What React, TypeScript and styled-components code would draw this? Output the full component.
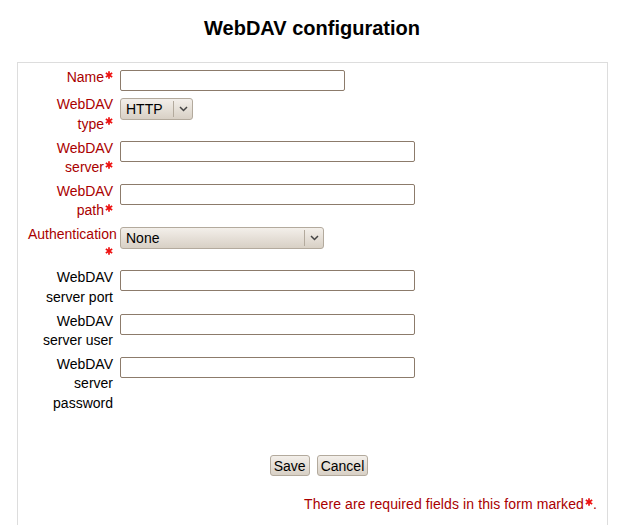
import React from "react";
import styled, { createGlobalStyle } from "styled-components";

const Global = createGlobalStyle`
  html, body { margin: 0; padding: 0; background: #fff; }
  body { font-family: "Liberation Sans", Arial, sans-serif; color: #000; }
`;

const Page = styled.div`
  width: 624px;
  height: 525px;
  overflow: hidden;
`;

const Title = styled.h2`
  margin: 0;
  padding-top: 17px;
  height: 62px;
  box-sizing: border-box;
  text-align: center;
  font-size: 20px;
  font-weight: bold;
  line-height: 23px;
`;

const Panel = styled.div`
  margin: 0 16px 0 17px;
  border: 1px solid #dddddd;
  border-bottom: none;
  padding: 5px 10px 0 10px;
  height: 500px;
  box-sizing: border-box;
`;

const Rows = styled.div`
  display: flex;
  flex-direction: column;
  gap: 4.25px;
`;

const Row = styled.div`
  display: grid;
  grid-template-columns: 85px 1fr;
  column-gap: 7px;
  align-items: start;
`;

const Label = styled.label<{ $required?: boolean }>`
  text-align: right;
  font-size: 14px;
  line-height: 19.5px;
  color: ${(p) => (p.$required ? "#aa0000" : "#000")};
`;

const StarIcon = styled.svg`
  display: inline-block;
  width: 8px;
  height: 8px;
  margin-left: 1px;
  vertical-align: 3.5px;
`;

const Star = () => (
  <StarIcon viewBox="0 0 8 8" aria-label="Required field">
    <g stroke="#ee1111" strokeWidth="1.7" strokeLinecap="butt">
      <line x1="4" y1="0.3" x2="4" y2="7.7" />
      <line x1="0.8" y1="2.1" x2="7.2" y2="5.9" />
      <line x1="0.8" y1="5.9" x2="7.2" y2="2.1" />
    </g>
  </StarIcon>
);

const Field = styled.div<{ $top?: number }>`
  padding-top: ${(p) => p.$top ?? 2}px;
`;

const TextInput = styled.input<{ $w: number }>`
  display: block;
  box-sizing: border-box;
  width: ${(p) => p.$w}px;
  height: 21px;
  margin: 0;
  border: 1px solid #8c7b6b;
  border-radius: 2px;
  background: #fff;
  outline: none;
`;

const SelectBox = styled.div<{ $w: number }>`
  box-sizing: border-box;
  width: ${(p) => p.$w}px;
  height: 22px;
  display: flex;
  align-items: stretch;
  border: 1px solid #b3aa9d;
  border-radius: 3px;
  background: linear-gradient(#f3efea, #d8d0c5);
  font-size: 14px;
  color: #000;
`;

const SelectText = styled.span`
  flex: 1;
  display: flex;
  align-items: center;
  padding-left: 5px;
`;

const SelectArrow = styled.span`
  width: 18px;
  display: flex;
  align-items: center;
  justify-content: center;
  border-left: 1px solid #b3aa9d;
  margin: 2px 0;
`;

const Actions = styled.div`
  display: flex;
  justify-content: center;
  gap: 7px;
  margin-top: 42px;
  padding-left: 13px;
`;

const Button = styled.button`
  box-sizing: border-box;
  height: 21px;
  padding: 0 3px;
  border: 1px solid #b3aa9d;
  border-radius: 3px;
  background: linear-gradient(#f3efea, #d8d0c5);
  font-family: "Liberation Sans", Arial, sans-serif;
  font-size: 14px;
  color: #000;
`;

const Note = styled.div`
  margin-top: 20px;
  text-align: right;
  font-size: 14px;
  letter-spacing: 0.1px;
  color: #aa0000;
`;

const Chevron = () => (
  <svg width="9" height="6" viewBox="0 0 9 6">
    <path d="M1 1 L4.5 4.5 L8 1" fill="none" stroke="#444" strokeWidth="1.5" />
  </svg>
);

const Select = ({ w, value }: { w: number; value: string }) => (
  <SelectBox $w={w}>
    <SelectText>{value}</SelectText>
    <SelectArrow>
      <Chevron />
    </SelectArrow>
  </SelectBox>
);

type Item = {
  label: React.ReactNode;
  required?: boolean;
  kind: "input" | "select";
  w: number;
  value?: string;
  top?: number;
};

const items: Item[] = [
  { label: "Name", required: true, kind: "input", w: 225 },
  { label: <>WebDAV<br />type</>, required: true, kind: "select", w: 73, value: "HTTP", top: 3 },
  { label: <>WebDAV<br />server</>, required: true, kind: "input", w: 295 },
  { label: <>WebDAV<br />path</>, required: true, kind: "input", w: 295 },
  { label: "Authentication", required: true, kind: "select", w: 204, value: "None" },
  { label: <>WebDAV<br />server port</>, kind: "input", w: 295 },
  { label: <>WebDAV<br />server user</>, kind: "input", w: 295 },
  { label: <>WebDAV<br />server<br />password</>, kind: "input", w: 295 },
];

export default function App() {
  return (
    <Page>
      <Global />
      <Title>WebDAV configuration</Title>
      <Panel>
        <Rows>
          {items.map((it, i) => (
            <Row key={i}>
              <Label $required={it.required}>
                {it.label}
                {it.required && <Star />}
              </Label>
              <Field $top={it.top}>
                {it.kind === "input" ? (
                  <TextInput $w={it.w} type="text" />
                ) : (
                  <Select w={it.w} value={it.value ?? ""} />
                )}
              </Field>
            </Row>
          ))}
        </Rows>
        <Actions>
          <Button>Save</Button>
          <Button>Cancel</Button>
        </Actions>
        <Note>
          There are required fields in this form marked<Star />.
        </Note>
      </Panel>
    </Page>
  );
}
